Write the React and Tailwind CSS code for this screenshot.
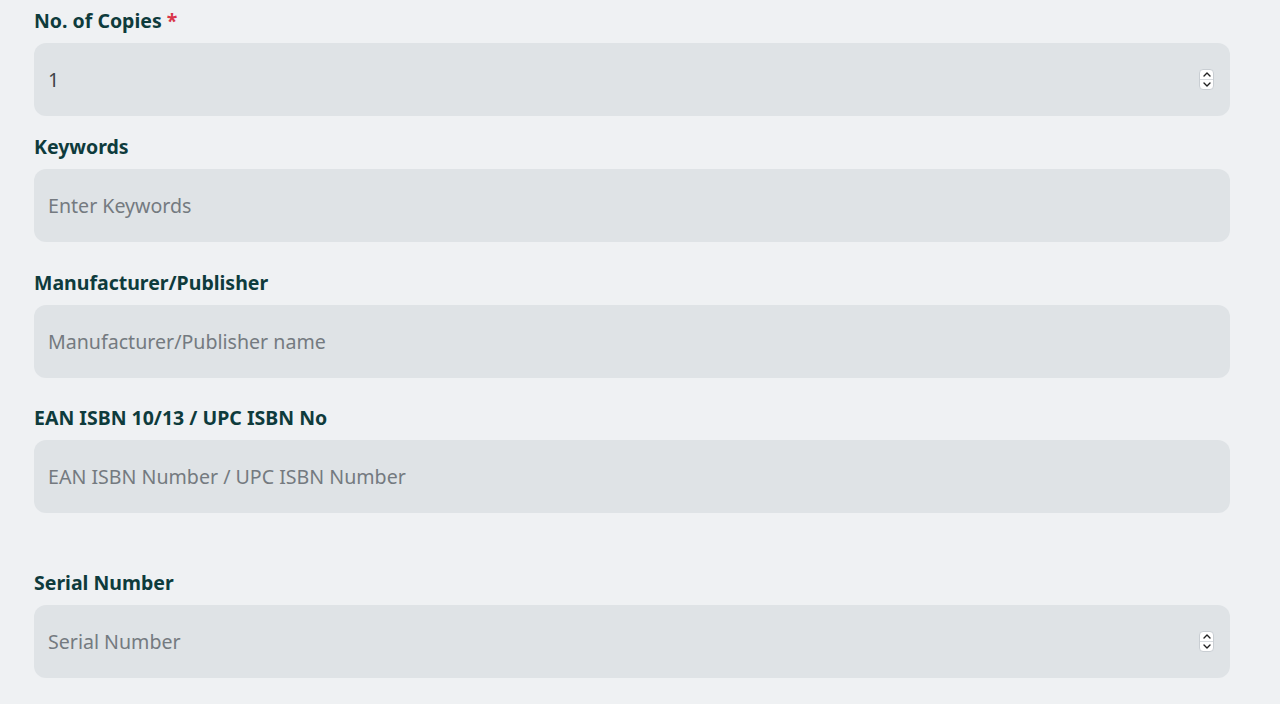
import React from 'react'

function Spinner() {
  return (
    <div className="flex h-[21px] w-[15px] flex-col overflow-hidden rounded-[4px] border border-[#c9ced3] bg-white">
      <div className="flex flex-1 items-center justify-center border-b border-[#d8dce0]">
        <svg width="8" height="5" viewBox="0 0 8 5" fill="none">
          <path d="M1 4L4 1L7 4" stroke="#222" strokeWidth="1.4" strokeLinecap="round" strokeLinejoin="round" />
        </svg>
      </div>
      <div className="flex flex-1 items-center justify-center">
        <svg width="8" height="5" viewBox="0 0 8 5" fill="none">
          <path d="M1 1L4 4L7 1" stroke="#222" strokeWidth="1.4" strokeLinecap="round" strokeLinejoin="round" />
        </svg>
      </div>
    </div>
  )
}

function Field({ label, required, value, placeholder, spinner, className = '' }) {
  return (
    <div className={className}>
      <label className="block h-6 text-[19.5px] font-bold leading-6 text-[#0e3b3c]">
        {label}
        {required && <span className="ml-[5px] text-[#d9354a]">*</span>}
      </label>
      <div className="mt-[10px] flex h-[73px] w-[1196px] items-center rounded-xl bg-[#dfe3e6] pl-[14px] pr-[16px]">
        <span className={`flex-1 text-[19.6px] ${value ? 'text-[#3f4448]' : 'text-[#747a80]'}`}>
          {value || placeholder}
        </span>
        {spinner && <Spinner />}
      </div>
    </div>
  )
}

export default function App() {
  return (
    <div
      className="min-h-[704px] w-full bg-[#eff1f3] pl-[34px] pt-[9px]"
      style={{ fontFamily: '"Noto Sans", Inter, sans-serif' }}
    >
      <Field label="No. of Copies" required value="1" spinner />
      <Field className="mt-[19px]" label="Keywords" placeholder="Enter Keywords" />
      <Field className="mt-[29px]" label="Manufacturer/Publisher" placeholder="Manufacturer/Publisher name" />
      <Field className="mt-[28px]" label="EAN ISBN 10/13 / UPC ISBN No" placeholder="EAN ISBN Number / UPC ISBN Number" />
      <Field className="mt-[58px]" label="Serial Number" placeholder="Serial Number" spinner />
    </div>
  )
}
